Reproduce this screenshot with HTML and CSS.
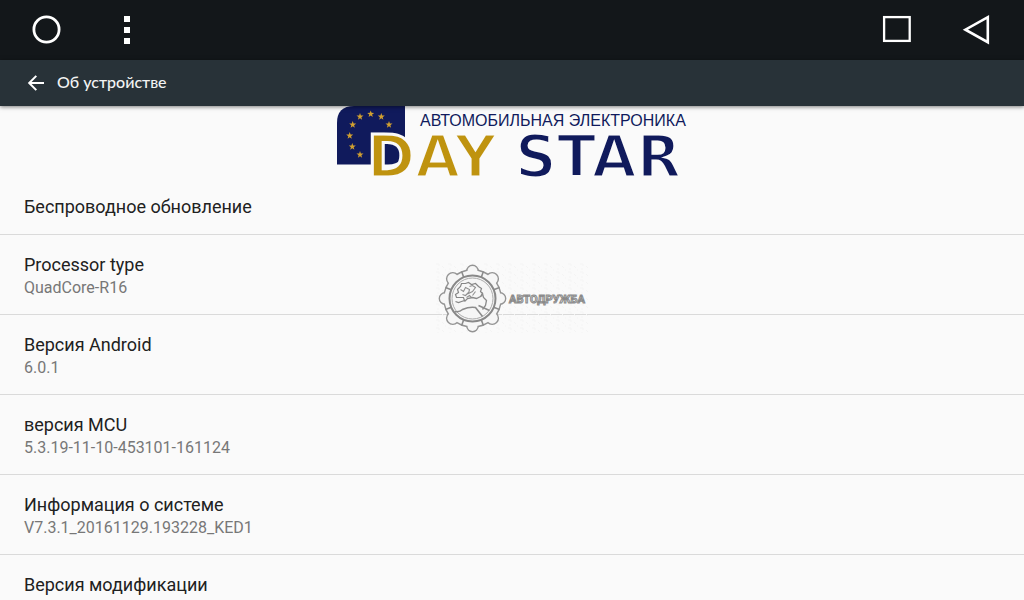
FILE: index.html
```html
<!DOCTYPE html>
<html lang="ru">
<head>
  <meta charset="UTF-8">
  <meta name="viewport" content="width=device-width, initial-scale=1">
  <title>Об устройстве</title>
  <link rel="stylesheet" href="styles.css">
</head>
<body>

<nav class="navbar">
  <button class="nav-btn" aria-label="Домой">
    <svg width="32" height="32" viewBox="0 0 32 32"><circle cx="15.5" cy="15.5" r="12.6" fill="none" stroke="#fff" stroke-width="2.8"/></svg>
  </button>
  <button class="nav-btn" aria-label="Меню">
    <svg width="32" height="32" viewBox="0 0 32 32" fill="#fff"><path d="M13 2h6v6h-6zM13 13h6v6h-6zM13 24h6v6h-6z"/></svg>
  </button>
  <span class="spacer"></span>
  <button class="nav-btn" aria-label="Недавние">
    <svg width="32" height="32" viewBox="0 0 32 32"><rect x="3.1" y="3.1" width="25.6" height="23.8" fill="none" stroke="#fff" stroke-width="2.3"/></svg>
  </button>
  <button class="nav-btn" aria-label="Назад">
    <svg width="32" height="32" viewBox="0 0 32 32"><path d="M26.8 3.2v25L4.4 15.7z" fill="none" stroke="#fff" stroke-width="2.6"/></svg>
  </button>
</nav>

<header class="toolbar">
  <button class="back-btn" aria-label="Назад">
    <svg width="18" height="18" viewBox="0 0 18 18" fill="none" stroke="#fff" stroke-width="2"><path d="M17 9H2.5M9.3 1.9L2.2 9l7.1 7.1"/></svg>
  </button>
  <h1>Об устройстве</h1>
</header>

<main class="content">
  <svg class="logo" width="350" height="71" viewBox="0 0 350 71" role="img" aria-label="Daystar">
    <defs>
      <path id="star" d="M0-3.6L.9-1.2 3.5-1.1 1.4.5 2.1 3 0 1.6-2.1 3-1.4.5-3.5-1.1-.9-1.2z"/>
    </defs>
    <path class="navy" d="M17 0H68V42Q68 58 51 58.5H0V17Q0 0 17 0z"/>
    <g fill="#d1a030">
      <use href="#star" x="33.7" y="8"/>
      <use href="#star" x="23" y="10.7"/>
      <use href="#star" x="15.7" y="18.7"/>
      <use href="#star" x="12.7" y="29.7"/>
      <use href="#star" x="15.3" y="40.7"/>
      <use href="#star" x="23" y="48.7"/>
      <use href="#star" x="44.3" y="10.7"/>
      <use href="#star" x="52" y="18.7"/>
    </g>
    <text class="logo-caption navy" x="83" y="20">АВТОМОБИЛЬНАЯ ЭЛЕКТРОНИКА</text>
    <text class="logo-name gold" x="30" y="71">DAY</text>
    <text class="logo-name navy" x="178" y="71">STAR</text>
  </svg>

  <ul class="prefs">
    <li>
      <div class="title">Беспроводное обновление</div>
    </li>
    <li>
      <div class="title">Processor type</div>
      <div class="summary">QuadCore-R16</div>
    </li>
    <li>
      <div class="title">Версия Android</div>
      <div class="summary">6.0.1</div>
    </li>
    <li>
      <div class="title">версия MCU</div>
      <div class="summary">5.3.19-11-10-453101-161124</div>
    </li>
    <li>
      <div class="title">Информация о системе</div>
      <div class="summary">V7.3.1_20161129.193228_KED1</div>
    </li>
    <li>
      <div class="title">Версия модификации</div>
    </li>
  </ul>
</main>

<!-- watermark over the list -->
<svg class="watermark" width="154" height="70" viewBox="0 0 154 70" role="img" aria-label="Автодружба">
  <defs>
    <pattern id="grain" width="12" height="8" patternUnits="userSpaceOnUse">
      <path d="M1 1h3v2M7 3l2 2M2 6h2M10 7h1" fill="none" stroke="#f4f4f4" stroke-width="1"/>
    </pattern>
    <g id="gear">
      <circle r="28"/>
      <circle cy="-27.5" r="5"/>
      <circle cy="27.5" r="5"/>
      <circle cx="-27.5" r="5"/>
      <circle cx="27.5" r="5"/>
      <circle cx="19.7" cy="-19.7" r="5.5"/>
      <circle cx="-19.7" cy="-19.7" r="5.5"/>
      <circle cx="19.7" cy="19.7" r="5.5"/>
      <circle cx="-19.7" cy="19.7" r="5.5"/>
    </g>
  </defs>
  <rect width="154" height="70" fill="url(#grain)"/>
  <g transform="translate(37.5 35.5)">
    <use href="#gear" fill="#949494" stroke="#949494" stroke-width="2.8"/>
    <use href="#gear" fill="#f6f6f6"/>
    <g fill="none" stroke="#8c8c8c" stroke-width="1.6">
      <path d="M8.8-21.2L10.9-27M21.2-8.8L27-10.9M21.2 8.8L27 10.9M8.8 21.2L10.9 27M-8.8 21.2L-10.9 27M-21.2 8.8L-27 10.9M-21.2-8.8L-27-10.9M-8.8-21.2L-10.9-27"/>
      <circle r="23" stroke="#888" stroke-width="2"/>
      <circle r="20.5" stroke="#aaa" stroke-width="1"/>
      <path stroke="#858585" stroke-width="1.2" d="M-17 3l3 1 3-1 3-1-1-3-4 0-3 0-1-3 3-2-1-3 3-3 1-3 4 0 3-1 3 2 4-1 3 3 3 2-1 3 2 2-1 3"/>
      <path stroke="#909090" stroke-width="1.1" d="M-12-9l3 2 2-4 4 2-1 4 4-2 3-4-3-2-3 1M-10-4l3 1 3-3M-6-1l3-2 2 2M3-7l-3 4"/>
      <path stroke="#8a8a8a" stroke-width="1.3" d="M-8 3L-5 0l5-1 4 1 4-2 2-3 1 4 3 3-1 5-3 4"/>
      <path d="M-18 13Q-13 14-10 11-3 8 3 9L10 18M6 7L17 12"/>
    </g>
  </g>
  <text class="watermark-text" x="74" y="40">АВТОДРУЖБА</text>
</svg>

</body>
</html>
```

FILE: styles.css
```css
* {
  box-sizing: border-box;
}

body {
  margin: 0;
  height: 100vh;
  display: flex;
  flex-direction: column;
  overflow: hidden;
  position: relative;
  background-color: #fafafa;
  font-family: Roboto, "Noto Sans", sans-serif;
  color: #212121;
}

button {
  display: flex;
  align-items: center;
  justify-content: center;
  padding: 0;
  border: none;
  background: none;
  cursor: pointer;
}

.navbar {
  display: flex;
  flex: none;
  height: 60px;
  padding: 0 7px;
  background-color: #13171a;
}

.nav-btn {
  width: 80px;
}

.spacer {
  flex: 1;
}

.toolbar {
  display: flex;
  flex: none;
  align-items: center;
  gap: 12px;
  height: 46px;
  padding: 0 27px;
  background-color: #283238;
  box-shadow: 0 1px 4px rgba(0, 0, 0, 0.5);
  z-index: 1;
}

.toolbar h1 {
  margin: 0;
  padding-bottom: 2px;
  font-family: Lato, "Noto Sans", sans-serif;
  font-size: 16px;
  line-height: 20px;
  font-weight: 500;
  color: #f2f3f3;
}

.content {
  flex: 1;
  min-height: 0;
  overflow-y: auto;
  scrollbar-width: none;
}

.logo {
  display: block;
  margin: 0 auto;
  overflow: visible;
}

.navy { fill: #101a5c; }
.gold { fill: #bf930f; }

.logo-caption {
  font-family: "Liberation Sans", Arial, sans-serif;
  font-size: 16px;
}

.logo-name {
  font-family: "DejaVu Sans", sans-serif;
  font-size: 58px;
  font-weight: bold;
  stroke: #fafafa;
  stroke-width: 3px;
}

.prefs {
  list-style: none;
  margin: 0;
  padding: 0;
}

.prefs li {
  padding: 18px 24px 15px;
  border-bottom: 1px solid #dadada;
}

.title {
  font-size: 18px;
  line-height: 24px;
}

.summary {
  font-size: 16px;
  line-height: 22px;
  color: #777;
}

.watermark {
  position: absolute;
  top: 263px;
  left: calc(50% - 77px);
}

.watermark-text {
  font-family: Roboto, "Liberation Sans", sans-serif;
  font-size: 11px;
  font-weight: bold;
  fill: #e4e4e4;
  stroke: #8a8a8a;
  stroke-width: 1px;
}
```
